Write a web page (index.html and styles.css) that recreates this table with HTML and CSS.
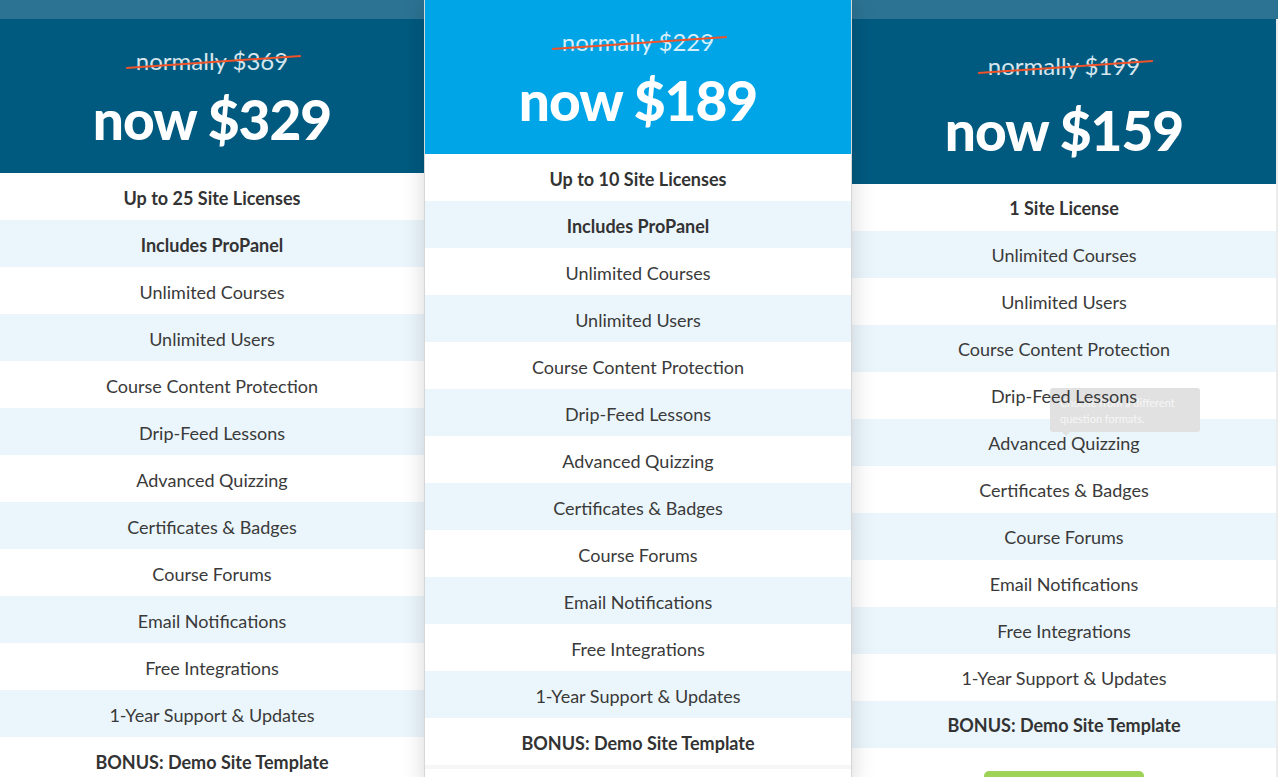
FILE: index.html
```html
<!DOCTYPE html>
<html lang="en">
<head>
<meta charset="utf-8">
<title>Pricing</title>
<link rel="stylesheet" href="styles.css">
</head>
<body>
<div class="pricing">
  <div class="plan plan-side plan-left">
    <div class="plan-head head-left">
      <div class="old"><span class="old-text">normally $369</span></div>
      <div class="now">now $329</div>
    </div>
    <ul class="features">
      <li class="strong"><span>Up to 25 Site Licenses</span></li>
      <li class="strong"><span>Includes ProPanel</span></li>
      <li><span>Unlimited Courses</span></li>
      <li><span>Unlimited Users</span></li>
      <li><span>Course Content Protection</span></li>
      <li><span>Drip-Feed Lessons</span></li>
      <li><span>Advanced Quizzing</span></li>
      <li><span>Certificates &amp; Badges</span></li>
      <li><span>Course Forums</span></li>
      <li><span>Email Notifications</span></li>
      <li><span>Free Integrations</span></li>
      <li><span>1-Year Support &amp; Updates</span></li>
      <li class="strong"><span>BONUS: Demo Site Template</span></li>
    </ul>
  </div>
  <div class="plan plan-mid">
    <div class="plan-head head-mid">
      <div class="old"><span class="old-text">normally $229</span></div>
      <div class="now">now $189</div>
    </div>
    <ul class="features">
      <li class="strong"><span>Up to 10 Site Licenses</span></li>
      <li class="strong"><span>Includes ProPanel</span></li>
      <li><span>Unlimited Courses</span></li>
      <li><span>Unlimited Users</span></li>
      <li><span>Course Content Protection</span></li>
      <li><span>Drip-Feed Lessons</span></li>
      <li><span>Advanced Quizzing</span></li>
      <li><span>Certificates &amp; Badges</span></li>
      <li><span>Course Forums</span></li>
      <li><span>Email Notifications</span></li>
      <li><span>Free Integrations</span></li>
      <li><span>1-Year Support &amp; Updates</span></li>
      <li class="strong"><span>BONUS: Demo Site Template</span></li>
    </ul>
    <div class="mid-foot"></div>
  </div>
  <div class="plan plan-side plan-right">
    <div class="plan-head head-right">
      <div class="old"><span class="old-text">normally $199</span></div>
      <div class="now">now $159</div>
    </div>
    <ul class="features">
      <li class="strong"><span>1 Site License</span></li>
      <li><span>Unlimited Courses</span></li>
      <li><span>Unlimited Users</span></li>
      <li><span>Course Content Protection</span></li>
      <li><span>Drip-Feed Lessons</span></li>
      <li class="has-tip"><span>Advanced Quizzing</span><div class="tip">Choose from a different question formats.</div></li>
      <li><span>Certificates &amp; Badges</span></li>
      <li><span>Course Forums</span></li>
      <li><span>Email Notifications</span></li>
      <li><span>Free Integrations</span></li>
      <li><span>1-Year Support &amp; Updates</span></li>
      <li class="strong"><span>BONUS: Demo Site Template</span></li>
    </ul>
    <div class="buy-wrap"><a class="buy" href="#"></a></div>
  </div>
</div>
</body>
</html>
```

FILE: styles.css
```css
html, body {
  margin: 0;
  padding: 0;
}
body {
  width: 1278px;
  height: 777px;
  overflow: hidden;
  background: linear-gradient(#2c7393 0, #2c7393 19px, #ffffff 19px);
  font-family: Lato, "Noto Sans", sans-serif;
  color: #3a3a3a;
}
.pricing {
  display: flex;
  align-items: flex-start;
}
.plan {
  background: #fff;
}
.plan-side {
  margin-top: 19px;
}
.plan-left {
  flex: 0 0 424px;
}
.plan-mid {
  flex: 0 0 426px;
  border-left: 1px solid #d6d6d6;
  border-right: 1px solid #d6d6d6;
  box-shadow: 0 0 22px rgba(0, 0, 0, 0.16);
  position: relative;
  z-index: 2;
}
.plan-right {
  flex: 0 0 424px;
  border-right: 2px solid #ececec;
  min-height: 800px;
}
.plan-head {
  display: flex;
  flex-direction: column;
  align-items: center;
  color: #fff;
  box-sizing: border-box;
}
.head-left {
  background: #005a7f;
  height: 154px;
  padding-top: 28px;
}
.head-mid {
  background: #00a5e8;
  height: 154px;
  padding-top: 28px;
}
.head-right {
  background: #005a7f;
  height: 165px;
  padding-top: 33px;
}
.old {
  font-size: 24px;
  line-height: 28px;
  color: #d6e6ee;
}
.head-mid .old {
  color: #d4effb;
}
.old-text {
  position: relative;
  display: inline-block;
}
.old-text::after {
  content: "";
  position: absolute;
  left: -10px;
  right: -13px;
  top: 14px;
  height: 2px;
  background: #f0522a;
  transform: rotate(-3.9deg);
}
.now {
  font-size: 55px;
  font-weight: 900;
  line-height: 60px;
  margin-top: 14px;
  letter-spacing: -1px;
}
.head-right .now {
  margin-top: 20px;
}
.features {
  list-style: none;
  margin: 0;
  padding: 0;
}
.features li {
  height: 47px;
  box-sizing: border-box;
  padding-top: 2px;
  display: flex;
  align-items: center;
  justify-content: center;
  font-size: 18px;
  color: #3a3a3a;
  position: relative;
}
.plan-right .features li {
  padding-top: 0;
}
.features li span {
  position: relative;
  z-index: 3;
}
.features li:nth-child(even) {
  background: #ebf6fc;
}
.features li.strong {
  font-weight: 700;
  color: #333;
}
.mid-foot {
  height: 20px;
  border-top: 4px solid #f6f6f6;
}
.tip {
  position: absolute;
  left: 198px;
  top: -31px;
  width: 150px;
  height: 44px;
  box-sizing: border-box;
  padding: 7px 10px;
  background: #e1e1e1;
  border-radius: 3px;
  color: #f6f6f6;
  font-size: 11px;
  line-height: 16px;
  z-index: 2;
}
.tip::after {
  content: "";
  position: absolute;
  left: 12px;
  bottom: -4px;
  border-left: 4px solid transparent;
  border-right: 4px solid transparent;
  border-top: 4px solid #e1e1e1;
}
.buy-wrap {
  display: flex;
  justify-content: center;
  padding-top: 23px;
}
.buy {
  display: block;
  width: 160px;
  height: 44px;
  background: #9dd357;
  border-radius: 5px;
}
```
